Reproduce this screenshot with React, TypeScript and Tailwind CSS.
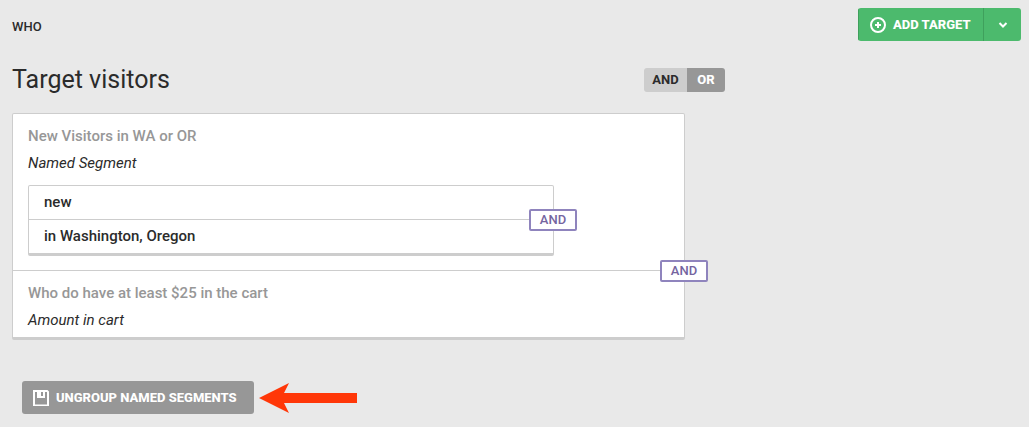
import React from 'react';

function AndBadge() {
  return (
    <span className="absolute top-0 right-0 flex h-[22px] w-12 translate-x-1/2 -translate-y-1/2 items-center justify-center rounded-xs border-2 border-[#8f84bd] bg-white text-[13px] font-medium leading-4 text-[#75659f]">
      AND
    </span>
  );
}

function PlusCircle() {
  return (
    <svg viewBox="0 0 16 16" className="size-4 shrink-0" fill="none" stroke="currentColor" strokeWidth="2" aria-hidden="true">
      <circle cx="8" cy="8" r="7" />
      <path d="M8 5v6M5 8h6" />
    </svg>
  );
}

function ChevronDown() {
  return (
    <svg viewBox="0 0 10 8" className="h-2 w-2.5" fill="none" stroke="currentColor" strokeWidth="2" aria-hidden="true">
      <path d="M1.5 2 5 5.5 8.5 2" />
    </svg>
  );
}

function SaveIcon() {
  return (
    <svg viewBox="0 0 16 16" className="size-4 shrink-0" fill="currentColor" aria-hidden="true">
      <path fillRule="evenodd" d="M0 0H14.5L16 1.5V16H0ZM2 2V14.5H14V2H12V8H4V2ZM8 2V6H10V2Z" />
    </svg>
  );
}

function Arrow() {
  return (
    <svg viewBox="0 0 98 30" className="h-[30px] w-[98px] shrink-0" aria-hidden="true">
      <path fill="#ff3708" d="M0 15 30 0 25 10H98V20H25L30 30Z" />
    </svg>
  );
}

export default function App() {
  return (
    <main className="min-h-screen bg-[#e9e9e9] pt-2 pr-2 pb-3 pl-3 font-['Roboto','Liberation_Sans',sans-serif] text-[#2b2b2b]">
      <header className="flex items-center justify-between">
        <h1 className="pt-1 text-[13px] font-medium leading-4">WHO</h1>
        <div className="flex h-[33px] overflow-hidden rounded-[3px] bg-[#4cba6d] text-[13px] font-extrabold leading-4 text-white">
          <button type="button" className="flex w-[125px] items-center gap-[7px] border-l border-[#3fa05c] pl-[11px] whitespace-nowrap">
            <PlusCircle />
            ADD TARGET
          </button>
          <button type="button" aria-label="More target options" className="flex w-[38px] items-center justify-center border-l border-[#3fa05c]">
            <ChevronDown />
          </button>
        </div>
      </header>

      <section className="mt-[23px] max-w-[713px]">
        <div className="flex items-center justify-between">
          <h2 className="text-[25px] leading-8">Target visitors</h2>
          <div role="group" aria-label="Match mode" className="flex h-6 overflow-hidden rounded-[3px] text-[13px] leading-4">
            <button type="button" aria-pressed="false" className="w-[43px] bg-[#cdcdcd] font-bold">AND</button>
            <button type="button" aria-pressed="true" className="w-[38px] bg-[#979797] font-extrabold text-white">OR</button>
          </div>
        </div>

        <ul className="mt-[17px] mr-10 rounded-xs border border-b-3 border-[#cdcdcd] bg-white text-[15px] leading-5">
          <li className="px-[15px] pt-3 pb-[14px]">
            <h3 className="font-medium text-[#979797]">New Visitors in WA or OR</h3>
            <p className="mt-[7px] italic">Named Segment</p>
            <ul className="mt-3 mr-[115px] rounded-xs border border-b-3 border-[#cdcdcd] font-medium">
              <li className="px-[15px] pt-[6px] pb-[7px]">new</li>
              <li className="relative border-t border-[#cdcdcd] px-[15px] pt-[6px] pb-[7px]">
                in Washington, Oregon
                <AndBadge />
              </li>
            </ul>
          </li>
          <li className="relative border-t border-[#cdcdcd] px-[15px] pt-3 pb-[7px]">
            <h3 className="font-medium text-[#979797]">Who do have at least $25 in the cart</h3>
            <p className="mt-[7px] italic">Amount in cart</p>
            <AndBadge />
          </li>
        </ul>
      </section>

      <footer className="mt-[41px] ml-[10px] flex items-center gap-[5px]">
        <button type="button" className="flex h-[33px] w-[232px] items-center gap-[7px] rounded-[3px] bg-[#979797] pl-[11px] text-[13px] font-extrabold leading-4 whitespace-nowrap text-white">
          <SaveIcon />
          UNGROUP NAMED SEGMENTS
        </button>
        <Arrow />
      </footer>
    </main>
  );
}
